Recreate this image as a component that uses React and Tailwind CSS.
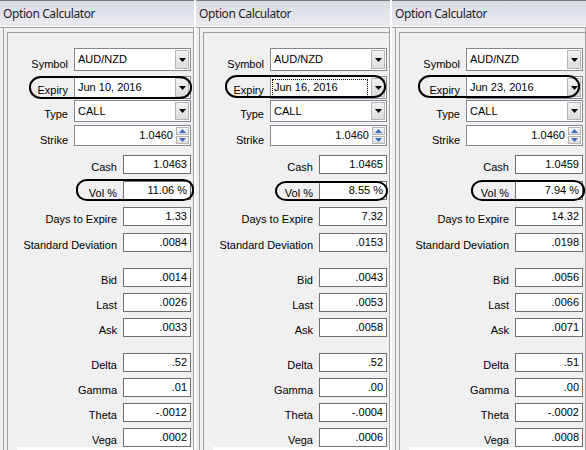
import React from "react";

const panels = [
  {
    expiry: "Jun 10, 2016",
    focus: false,
    ovalExpiry: "left-[29px] top-[76px] w-[163px] h-[23px]",
    ovalVol: "left-[76px] top-[179px] w-[118px] h-[22px]",
    values: {
      cash: "1.0463", vol: "11.06 %", days: "1.33", sd: ".0084",
      bid: ".0014", last: ".0026", ask: ".0033",
      delta: ".52", gamma: ".01", theta: "-.0012", vega: ".0002",
    },
  },
  {
    expiry: "Jun 16, 2016",
    focus: true,
    ovalExpiry: "left-[29px] top-[75px] w-[161px] h-[23px]",
    ovalVol: "left-[79px] top-[181px] w-[113px] h-[20px]",
    values: {
      cash: "1.0465", vol: "8.55 %", days: "7.32", sd: ".0153",
      bid: ".0043", last: ".0053", ask: ".0058",
      delta: ".52", gamma: ".00", theta: "-.0004", vega: ".0006",
    },
  },
  {
    expiry: "Jun 23, 2016",
    focus: false,
    ovalExpiry: "left-[26px] top-[75px] w-[162px] h-[23px]",
    ovalVol: "left-[79px] top-[180px] w-[114px] h-[21px]",
    values: {
      cash: "1.0459", vol: "7.94 %", days: "14.32", sd: ".0198",
      bid: ".0056", last: ".0066", ask: ".0071",
      delta: ".51", gamma: ".00", theta: "-.0002", vega: ".0008",
    },
  },
];

function DropButton() {
  return (
    <div className="my-[1px] mr-[1px] w-[14px] border border-[#b4b4b4] bg-gradient-to-b from-[#f2f2f2] to-[#dcdcdc] flex items-center justify-center">
      <svg width="7" height="4" viewBox="0 0 7 4">
        <path d="M0 0h7L3.5 4z" fill="#000" />
      </svg>
    </div>
  );
}

function Spinner() {
  return (
    <div className="my-[1px] mr-[1px] w-[13px] flex flex-col gap-[1px]">
      {[0, 1].map((i) => (
        <div
          key={i}
          className="flex-1 border border-[#b4b4b4] bg-gradient-to-b from-[#f4f4f4] to-[#dedede] flex items-center justify-center"
        >
          <svg width="7" height="4" viewBox="0 0 7 4">
            <path d={i === 0 ? "M0 4h7L3.5 0z" : "M0 0h7L3.5 4z"} fill="#3b6cc4" />
          </svg>
        </div>
      ))}
    </div>
  );
}

function TopRow({ label, value, h, mt, pt, kind, focus }) {
  return (
    <div className={`flex ${h} ${mt}`}>
      <div className={`w-[60px] text-right ${pt} leading-[13px]`}>{label}</div>
      <div className="ml-[6px] w-[117px] h-full border border-[#828790] bg-white flex">
        {kind === "spin" ? (
          <div className="flex-1 pr-[3px] flex items-center justify-end leading-[13px]">{value}</div>
        ) : (
          <div className="flex-1 flex items-center pl-[1px] pr-[3px]">
            <div
              className={`h-[18px] flex-1 flex items-center pl-[1px] leading-[13px] border ${
                focus ? "border-dotted border-[#000]" : "border-transparent"
              }`}
            >
              {value}
            </div>
          </div>
        )}
        {kind === "spin" ? <Spinner /> : <DropButton />}
      </div>
    </div>
  );
}

function ValueRow({ label, value, mt }) {
  return (
    <div className={`flex h-[19px] ${mt}`}>
      <div className="w-[109px] text-right pt-[6px] leading-[13px] whitespace-nowrap">{label}</div>
      <div className="ml-[6px] w-[68px] h-full border border-[#6e6e6e] bg-white flex items-center justify-end pr-[3px] leading-[13px]">
        {value}
      </div>
    </div>
  );
}

function Panel({ p }) {
  const v = p.values;
  return (
    <div className="relative w-[194px] h-[450px] flex flex-col bg-[#f0f0f0] overflow-hidden text-[11px] text-black font-['Liberation_Sans',Arial,sans-serif]">
      {/* title bar */}
      <div className="h-[28px] shrink-0 border-t border-[#7c7c7c] bg-gradient-to-b from-[#d9dbe3] to-[#ebedf2] flex flex-col">
        <div className="flex-1 px-[3px] flex items-center text-[12px] tracking-[-0.4px] text-[#1e1e1e] font-['Noto_Sans',sans-serif]">
          Option Calculator
        </div>
        <div className="h-px bg-white" />
        <div className="h-px bg-[#a0a0a0]" />
      </div>

      {/* body */}
      <div className="flex-1 pl-[3px]">
        <div className="h-full border-l border-r border-[#a0a0a0] pl-[3px] pt-[4px]">
          <div className="h-full border-l border-t border-[#a0a0a0] pt-[15px] flex flex-col">
            <TopRow label="Symbol" value="AUD/NZD" h="h-[23px]" mt="" pt="pt-[10px]" />
            <TopRow label="Expiry" value={p.expiry} h="h-[23px]" mt="mt-[5px]" pt="pt-[8px]" focus={p.focus} />
            <TopRow label="Type" value="CALL" h="h-[22px]" mt="mt-[1px]" pt="pt-[8px]" />
            <TopRow label="Strike" value="1.0460" h="h-[21px]" mt="mt-[3px]" pt="pt-[9px]" kind="spin" />

            <ValueRow label="Cash" value={v.cash} mt="mt-[9px]" />
            <ValueRow label="Vol %" value={v.vol} mt="mt-[7px]" />
            <ValueRow label="Days to Expire" value={v.days} mt="mt-[7px]" />
            <ValueRow label="Standard Deviation" value={v.sd} mt="mt-[7px]" />

            <ValueRow label="Bid" value={v.bid} mt="mt-[16px]" />
            <ValueRow label="Last" value={v.last} mt="mt-[6px]" />
            <ValueRow label="Ask" value={v.ask} mt="mt-[6px]" />

            <ValueRow label="Delta" value={v.delta} mt="mt-[16px]" />
            <ValueRow label="Gamma" value={v.gamma} mt="mt-[6px]" />
            <ValueRow label="Theta" value={v.theta} mt="mt-[6px]" />
            <ValueRow label="Vega" value={v.vega} mt="mt-[6px]" />
            <div className="h-[4px] ml-[9px] bg-white shrink-0" />
          </div>
        </div>
      </div>

      {/* hand-drawn highlight ovals */}
      <div className={`absolute ${p.ovalExpiry} border-[2.5px] border-black rounded-[12px/11px] pointer-events-none`} />
      <div className={`absolute ${p.ovalVol} border-[2.5px] border-black rounded-[11px/10px] pointer-events-none`} />
    </div>
  );
}

export default function App() {
  return (
    <div className="w-[586px] h-[450px] bg-white flex gap-[2px] overflow-hidden">
      {panels.map((p, i) => (
        <Panel key={i} p={p} />
      ))}
    </div>
  );
}
